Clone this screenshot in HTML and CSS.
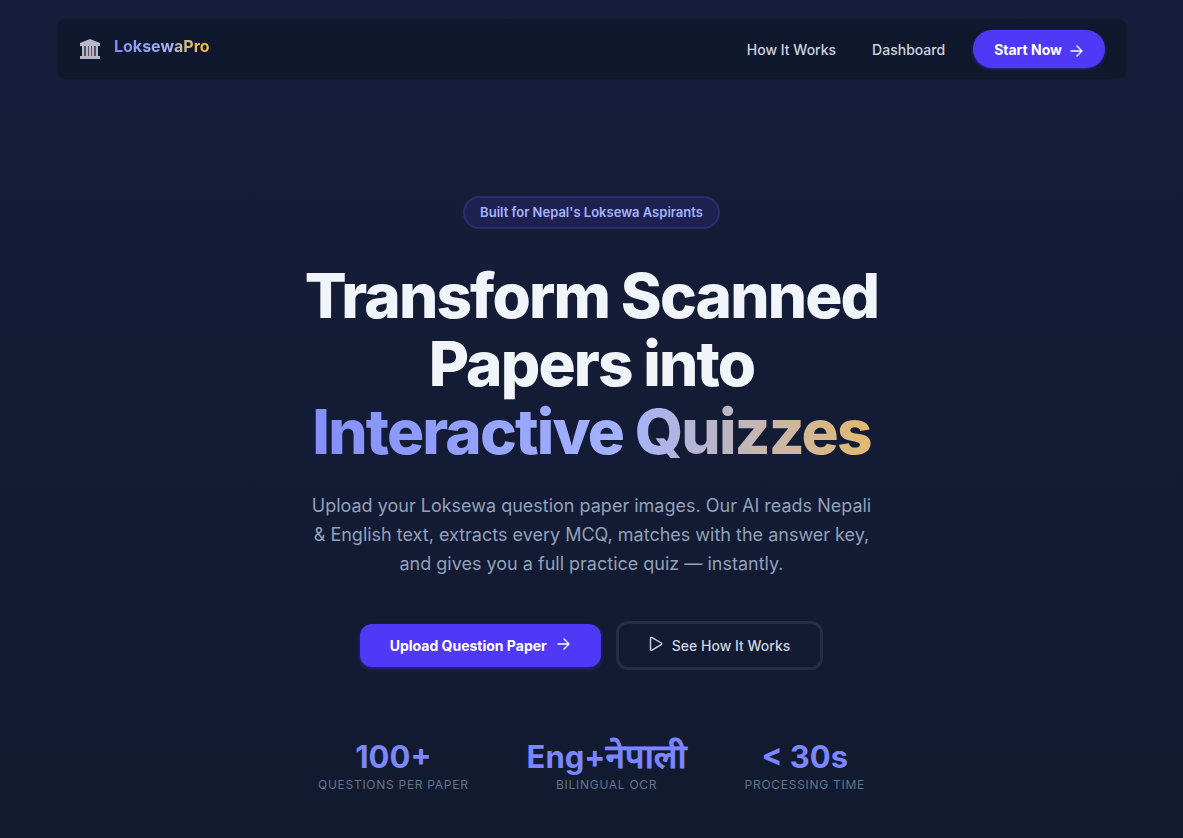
FILE: index.html
```html
<!DOCTYPE html>
<html lang="en">

<head>
    <meta charset="UTF-8">
    <meta name="viewport" content="width=device-width, initial-scale=1.0">
    <title>LoksewaPro</title>
    <link rel="stylesheet" href="styles.css">
</head>

<body>
    <header class="navbar">
        <a class="brand" href="#">
            <svg class="brand-icon" viewBox="0 0 20 20" aria-hidden="true">
                <path fill="#b9b6c6" d="M10 0 L20 4 V7 H0 V4 Z" />
                <path fill="#5c4f66" d="M2 7 H18 V17 H2 Z" />
                <path fill="#b9b6c6" d="M2 7H4V17H2zM6 7H8V17H6zM9 7H11V17H9zM12 7H14V17H12zM16 7H18V17H16z" />
                <path fill="#b9b6c6" d="M0 17 H20 V20 H0 Z" />
            </svg>
            <span class="brand-name">LoksewaPro</span>
        </a>
        <nav class="nav-links">
            <a class="nav-link" href="#how">How It Works</a>
            <a class="nav-link" href="#dashboard">Dashboard</a>
            <a class="nav-cta" href="#start">Start Now
                <svg class="icon-arrow" viewBox="0 0 14 14" aria-hidden="true">
                    <path d="M1 7H12M7 2L12 7L7 12" />
                </svg>
            </a>
        </nav>
    </header>

    <main class="hero">
        <p class="badge">Built for Nepal's Loksewa Aspirants</p>
        <h1 class="hero-title">Transform Scanned Papers into <span class="gradient-text">Interactive Quizzes</span></h1>
        <p class="hero-text">Upload your Loksewa question paper images. Our AI reads Nepali &amp; English text, extracts every MCQ, matches with the answer key, and gives you a full practice quiz — instantly.</p>

        <div class="hero-actions">
            <button class="btn btn-primary" type="button">Upload Question Paper
                <svg class="icon-arrow" viewBox="0 0 14 14" aria-hidden="true">
                    <path d="M1 7H12M7 2L12 7L7 12" />
                </svg>
            </button>
            <button class="btn btn-outline" type="button">
                <svg class="icon-play" viewBox="0 0 14 16" aria-hidden="true">
                    <path d="M1.500 2.500C1.500 1.600 2.200 1.200 3 1.600L12.300 7C13 7.500 13 8.200 12.300 8.700L3 14.200C2.200 14.600 1.500 14.200 1.500 13.400Z" />
                </svg>
                See How It Works
            </button>
        </div>

        <ul class="stats">
            <li class="stat">
                <span class="stat-value">100+</span>
                <span class="stat-label">Questions per paper</span>
            </li>
            <li class="stat">
                <span class="stat-value">Eng+<span class="nepali" lang="ne">नेपाली</span></span>
                <span class="stat-label">Bilingual OCR</span>
            </li>
            <li class="stat">
                <span class="stat-value">&lt; 30s</span>
                <span class="stat-label">Processing time</span>
            </li>
        </ul>
    </main>
</body>

</html>
```

FILE: styles.css
```css
* {
    box-sizing: border-box;
}

body {
    margin: 0;
    min-height: 100vh;
    font-family: Inter, "Noto Sans", sans-serif;
    color: #f1f5f9;
    background: linear-gradient(180deg, #171e3b 0%, #141b35 50%, #121a2f 100%);
}

a {
    text-decoration: none;
}

.navbar {
    display: flex;
    justify-content: space-between;
    align-items: center;
    margin: 18px 56px 0;
    padding: 11px 21px 11px 23px;
    background-color: #10182d;
    border: 1px solid #151d33;
    border-radius: 10px;
}

.brand {
    display: flex;
    align-items: center;
    gap: 14px;
}

.brand-icon {
    width: 20px;
    height: 20px;
}

.brand-name {
    padding-bottom: 6px;
    font-size: 16px;
    font-weight: 700;
    color: transparent;
    background: linear-gradient(90deg, #818cf8 0%, #a5b4fc 55%, #fbbf24 95%);
    -webkit-background-clip: text;
    background-clip: text;
}

.nav-links {
    display: flex;
    align-items: center;
}

.nav-link {
    margin-right: 36px;
    font-size: 14px;
    font-weight: 500;
    color: #cbd5e1;
}

.nav-link:nth-child(2) {
    margin-right: 28px;
}

.nav-cta {
    display: flex;
    align-items: center;
    gap: 8px;
    height: 38px;
    padding: 0 21px;
    font-size: 14px;
    font-weight: 700;
    color: #fff;
    background-color: #4f39f6;
    border-radius: 19px;
    box-shadow: 0 1px 3px rgba(79, 57, 246, 0.5);
}

.nav-cta svg {
    margin-top: 3px;
}

.icon-arrow,
.icon-play {
    width: 14px;
    height: 14px;
    fill: none;
    stroke: currentColor;
    stroke-width: 1.400;
    stroke-linecap: round;
    stroke-linejoin: round;
}

.icon-play {
    height: 16px;
}

.hero {
    display: flex;
    flex-direction: column;
    align-items: center;
    max-width: 600px;
    margin: 0 auto;
    padding: 116px 0 40px;
    text-align: center;
}

.badge {
    margin: 0;
    padding: 6px 15px;
    font-size: 13px;
    font-weight: 600;
    line-height: 17px;
    color: #a3b3ff;
    background-color: #1e2150;
    border: 2px solid #2c2d6e;
    border-radius: 17px;
}

.hero-title {
    margin: 33px 0 0;
    font-size: 62px;
    font-weight: 800;
    line-height: 68px;
    letter-spacing: -0.03em;
}

.gradient-text {
    display: block;
    color: transparent;
    background: linear-gradient(90deg, #818cf8 0%, #a3b3ff 55%, #e8b964 100%);
    -webkit-background-clip: text;
    background-clip: text;
}

.hero-text {
    max-width: 572px;
    margin: 25px 0 0;
    font-size: 18px;
    line-height: 29px;
    color: #90a1b9;
}

.hero-actions {
    display: flex;
    align-items: center;
    gap: 15px;
    margin-top: 43px;
}

.btn {
    display: flex;
    align-items: center;
    font-family: inherit;
    font-size: 14px;
    border-radius: 12px;
    cursor: pointer;
}

.btn svg {
    margin-bottom: 4px;
}

.btn-primary {
    gap: 10px;
    height: 43px;
    padding: 0 30px;
    font-weight: 700;
    color: #fff;
    background-color: #4f39f6;
    border: none;
    box-shadow: 0 2px 4px rgba(79, 57, 246, 0.4);
}

.btn-outline {
    gap: 9px;
    height: 49px;
    padding: 0 30px;
    font-weight: 500;
    color: #cbd5e1;
    background-color: transparent;
    border: 3px solid #252e44;
}

.stats {
    display: flex;
    gap: 58px;
    margin: 67px 0 0;
    padding: 0;
    list-style: none;
}

.stat {
    display: flex;
    flex-direction: column;
}

.stat-value {
    font-size: 31px;
    font-weight: 700;
    line-height: 40px;
    color: #7c86ff;
}

.nepali {
    font-size: 34px;
    font-weight: 500;
    line-height: 1;
    -webkit-text-stroke: 1px #7c86ff;
}

.stat-label {
    font-size: 12px;
    line-height: 16px;
    letter-spacing: 0.06em;
    text-transform: uppercase;
    color: #62748e;
}
```
